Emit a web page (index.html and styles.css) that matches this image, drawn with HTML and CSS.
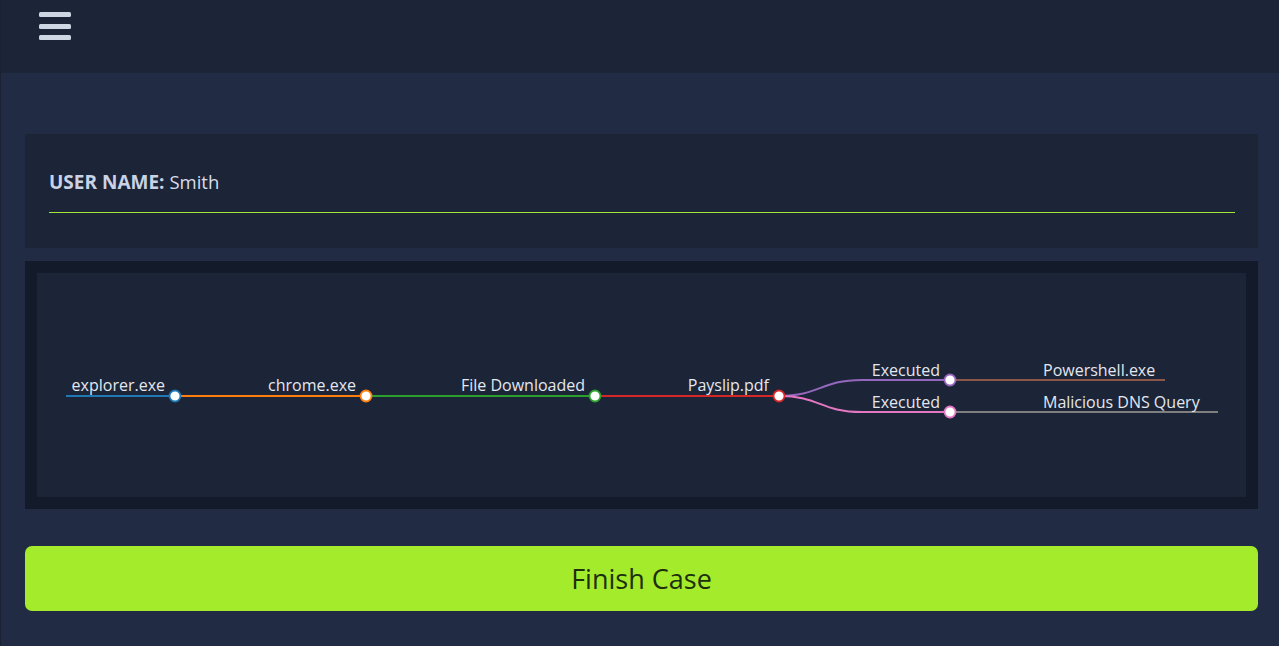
FILE: index.html
```html
<!DOCTYPE html>
<html lang="en">
<head>
<meta charset="utf-8">
<title>Case</title>
<link rel="stylesheet" href="styles.css">
</head>
<body>
<header class="topbar">
  <button class="menu-btn" aria-label="Menu">
    <span class="bar"></span><span class="bar"></span><span class="bar"></span>
  </button>
</header>
<main class="content">
  <section class="card user-card">
    <div class="user-line"><strong class="user-label">USER NAME:</strong> <span class="user-value">Smith</span></div>
    <div class="divider"></div>
  </section>
  <section class="graph-card">
    <div class="graph-inner">
      <svg class="graph" width="1208" height="224" viewBox="0 0 1208 224" xmlns="http://www.w3.org/2000/svg">
        <g fill="none" stroke-width="2">
          <path d="M29,123 H138" stroke="#1f77b4"/>
          <path d="M138,123 H329" stroke="#ff7f0e"/>
          <path d="M329,123 H558" stroke="#2ca02c"/>
          <path d="M558,123 H742" stroke="#d62728"/>
          <path d="M742,123 C783,123 783,107 825,107 H913" stroke="#9467bd"/>
          <path d="M742,123 C783,123 783,139 825,139 H913" stroke="#e377c2"/>
          <path d="M913,107 H1128" stroke="#8c564b"/>
          <path d="M913,139 H1181" stroke="#7f7f7f"/>
        </g>
        <g fill="#ffffff" stroke-width="1.8">
          <circle cx="138" cy="123" r="5.5" stroke="#1f77b4"/>
          <circle cx="329" cy="123" r="5.5" stroke="#ff7f0e"/>
          <circle cx="558" cy="123" r="5.5" stroke="#2ca02c"/>
          <circle cx="742" cy="123" r="5.5" stroke="#d62728"/>
          <circle cx="913" cy="107" r="5.5" stroke="#9467bd"/>
          <circle cx="913" cy="139" r="5.5" stroke="#e377c2"/>
        </g>
        <g class="labels">
          <text x="128" y="118" text-anchor="end">explorer.exe</text>
          <text x="319" y="118" text-anchor="end">chrome.exe</text>
          <text x="548" y="118" text-anchor="end">File Downloaded</text>
          <text x="732" y="118" text-anchor="end">Payslip.pdf</text>
          <text x="903" y="103" text-anchor="end">Executed</text>
          <text x="903" y="135" text-anchor="end">Executed</text>
          <text x="1006" y="103">Powershell.exe</text>
          <text x="1006" y="135">Malicious DNS Query</text>
        </g>
      </svg>
    </div>
  </section>
  <button class="finish-btn">Finish Case</button>
</main>
</body>
</html>
```

FILE: styles.css
```css
* { box-sizing: border-box; }
html, body { margin: 0; padding: 0; }
body {
  background: #212b44;
  font-family: "Open Sans", "Noto Sans", "Liberation Sans", sans-serif;
  width: 1279px;
  height: 646px;
  overflow: hidden;
  border-left: 1px solid #1a2133;
}
.topbar {
  height: 73px;
  background: #1c2437;
  padding: 12px 0 0 38px;
}
.menu-btn {
  display: flex;
  flex-direction: column;
  gap: 6.5px;
  background: none;
  border: 0;
  padding: 0;
  cursor: pointer;
}
.bar {
  display: block;
  width: 32px;
  height: 5px;
  border-radius: 1.5px;
  background: #cfd6e3;
}
.content {
  padding: 61px 21px 0 24px;
  display: flex;
  flex-direction: column;
}
.card {
  background: #1c2437;
}
.user-card {
  padding: 36px 23px 35px 24px;
}
.user-line {
  font-size: 19px;
  line-height: 24px;
  height: 24px;
  color: #d5dcea;
  white-space: nowrap;
}
.user-label {
  font-weight: 700;
  color: #c9d3e5;
}
.user-value {
  color: #d8deec;
  font-size: 18.5px;
}
.divider {
  margin-top: 18px;
  height: 1px;
  background: #a3e635;
}
.graph-card {
  margin-top: 13px;
  background: #131a29;
  padding: 12px;
}
.graph-inner {
  background: #1c2437;
  height: 224px;
}
.graph {
  display: block;
}
.labels text {
  font-family: "Open Sans", "Noto Sans", sans-serif;
  font-size: 16px;
  fill: #e3e7ef;
}
.finish-btn {
  margin-top: 37px;
  height: 65px;
  width: 100%;
  background: #a4eb2c;
  border: 0;
  border-radius: 7px;
  color: #1d2f0c;
  font-family: "Open Sans", "Noto Sans", sans-serif;
  font-size: 27px;
  cursor: pointer;
}
```
